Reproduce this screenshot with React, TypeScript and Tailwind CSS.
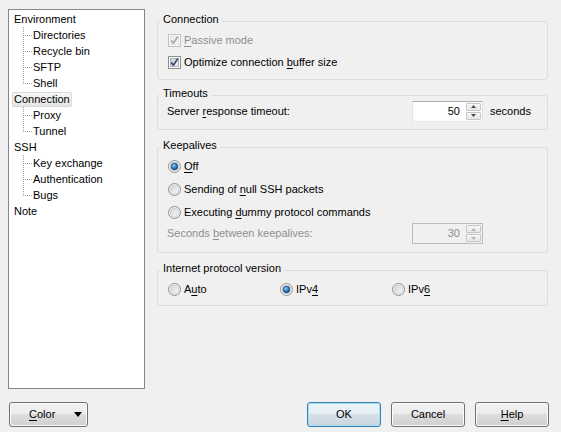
import React from "react";

const font = "font-['Liberation_Sans',Arial,sans-serif]";

function U({ children }: { children: React.ReactNode }) {
  return <span className="underline decoration-1 underline-offset-[2px]">{children}</span>;
}

function CheckBox({ checked, disabled }: { checked?: boolean; disabled?: boolean }) {
  const id = disabled ? "cbd" : "cbn";
  return (
    <svg width="13" height="13" viewBox="0 0 13 13" className="shrink-0">
      <defs>
        <linearGradient id={id} x1="0" y1="0" x2="1" y2="1">
          <stop offset="0" stopColor={disabled ? "#ececec" : "#cbcfd5"} />
          <stop offset="1" stopColor={disabled ? "#f7f7f7" : "#f6f6f6"} />
        </linearGradient>
      </defs>
      <rect x="0.5" y="0.5" width="12" height="12" fill="#fcfcfc" stroke={disabled ? "#c2c2c2" : "#8e8f8f"} />
      <rect x="2.5" y="2.5" width="8" height="8" fill={`url(#${id})`} stroke={disabled ? "#e2e2e2" : "#b1b4b9"} />
      {checked && (
        <path
          d="M3.2 6.4 L5.4 9.2 L9.9 2.6"
          fill="none"
          stroke={disabled ? "#a9a9a9" : "#3d4c70"}
          strokeWidth="1.7"
          strokeLinejoin="round"
        />
      )}
    </svg>
  );
}

function Radio({ checked }: { checked?: boolean }) {
  return (
    <svg width="13" height="13" viewBox="0 0 13 13" className="shrink-0">
      <defs>
        <linearGradient id="rbg" x1="0" y1="0" x2="1" y2="1">
          <stop offset="0" stopColor="#cdd1d6" />
          <stop offset="1" stopColor="#fbfbfb" />
        </linearGradient>
        <radialGradient id="rdot" cx="0.4" cy="0.35" r="0.7">
          <stop offset="0" stopColor="#9bd0f5" />
          <stop offset="0.55" stopColor="#2f78c0" />
          <stop offset="1" stopColor="#16466f" />
        </radialGradient>
      </defs>
      <circle cx="6.5" cy="6.5" r="6" fill="#f4f4f4" stroke="#8e8f8f" />
      <circle cx="6.5" cy="6.5" r="4.3" fill="url(#rbg)" stroke="#c7cacf" strokeWidth="0.8" />
      {checked && <circle cx="6.5" cy="6.5" r="3.4" fill="url(#rdot)" stroke="#1d4a78" strokeWidth="0.6" />}
    </svg>
  );
}

function SpinArrow({ up, disabled }: { up?: boolean; disabled?: boolean }) {
  return (
    <div className="flex h-[8px] w-[15px] items-center justify-center rounded-[1px] border border-[#c3c6ca] bg-[linear-gradient(to_bottom,#f7f7f7,#e6e6e6)]">
      <svg width="5" height="3" viewBox="0 0 5 3">
        <path d={up ? "M0 3 L2.5 0 L5 3 Z" : "M0 0 L2.5 3 L5 0 Z"} fill={disabled ? "#b4b4b4" : "#4a4a4a"} />
      </svg>
    </div>
  );
}

function Spin({ value, disabled }: { value: string; disabled?: boolean }) {
  return (
    <div
      className={`flex h-[21px] w-[71px] shrink-0 items-center border ${
        disabled ? "border-[#b9bcc0] bg-[#f0f0f0] text-[#8f8f8f]" : "border-[#abadb3] border-b-[#e3e9ef] border-l-[#e2e3ea] border-r-[#dbdfe6] bg-white"
      }`}
    >
      <span className="flex-1 pr-[6px] text-right">{value}</span>
      <div className="mr-[1px] flex flex-col gap-[1px]">
        <SpinArrow up disabled={disabled} />
        <SpinArrow disabled={disabled} />
      </div>
    </div>
  );
}

function Group({ title, className, children }: { title: string; className?: string; children: React.ReactNode }) {
  return (
    <fieldset className={`rounded-[3px] border border-[#d5dfe5] ${className ?? ""}`}>
      <legend className="ml-[2px] h-[16px] px-[3px] pb-[4px] leading-[12px]">{title}</legend>
      {children}
    </fieldset>
  );
}

function Connector({ last }: { last?: boolean }) {
  const v = [];
  for (let y = 0; y < (last ? 9 : 16); y += 2) v.push(<rect key={"v" + y} x="9" y={y} width="1" height="1" />);
  const h = [11, 13, 15, 17].map((x) => <rect key={"h" + x} x={x} y="8" width="1" height="1" />);
  return (
    <svg width="19" height="16" viewBox="0 0 19 16" className="shrink-0" fill="#a0a0a0">
      {v}
      {h}
    </svg>
  );
}

const tree: { label: string; children?: string[]; selected?: boolean }[] = [
  { label: "Environment", children: ["Directories", "Recycle bin", "SFTP", "Shell"] },
  { label: "Connection", children: ["Proxy", "Tunnel"], selected: true },
  { label: "SSH", children: ["Key exchange", "Authentication", "Bugs"] },
  { label: "Note" },
];

function Tree() {
  return (
    <div className="ml-[8px] mt-[9px] h-[380px] w-[137px] shrink-0 border border-[#828790] bg-white pl-[3px] pt-[1px]">
      {tree.map((node) => (
        <div key={node.label}>
          <div className="flex h-[16px] items-center">
            <span
              className={`flex h-[15px] items-center border px-[1px] ${
                node.selected ? "rounded-[2px] border-[#d9d9d9] bg-[linear-gradient(to_bottom,#f8f8f8,#e5e5e5)]" : "border-transparent"
              }`}
            >
              {node.label}
            </span>
          </div>
          {node.children?.map((c, i) => (
            <div key={c} className="flex h-[16px] items-center pl-[2px]">
              <Connector last={i === node.children!.length - 1} />
              <span>{c}</span>
            </div>
          ))}
        </div>
      ))}
    </div>
  );
}

function Button({ children, primary, className }: { children: React.ReactNode; primary?: boolean; className?: string }) {
  return (
    <div
      className={`flex h-[25px] items-center rounded-[3px] border ${
        primary
          ? "border-[#3c7fb1] shadow-[inset_0_0_0_1px_#a6e0f7] bg-[linear-gradient(to_bottom,#eef4f8_0%,#e4edf3_50%,#d5e1e9_50%,#c8d6df_100%)]"
          : "border-[#707070] shadow-[inset_0_0_0_1px_#fcfcfc] bg-[linear-gradient(to_bottom,#f2f2f2_0%,#ebebeb_50%,#dddddd_50%,#cfcfcf_100%)]"
      } ${className ?? ""}`}
    >
      {children}
    </div>
  );
}

export default function App() {
  return (
    <div className={`flex h-[432px] w-[561px] flex-col overflow-hidden bg-[#f0f0f0] text-[11px] text-black ${font}`}>
      <div className="flex">
        <Tree />
        <div className="ml-[12px] flex w-[391px] flex-col">
          {/* Connection */}
          <Group title="Connection" className="mt-[13px] pb-[6px]">
            <div className="flex h-[22px] items-center gap-[3px] pl-[10px] text-[#8f8f8f]">
              <CheckBox checked disabled />
              <span>
                <U>P</U>assive mode
              </span>
            </div>
            <div className="flex h-[22px] items-center gap-[3px] pl-[10px]">
              <CheckBox checked />
              <span>
                Optimize connection <U>b</U>uffer size
              </span>
            </div>
          </Group>

          {/* Timeouts */}
          <Group title="Timeouts" className="mt-[7px] pb-[7px]">
            <div className="-mt-[3px] flex h-[22px] items-center pl-[9px]">
              <span className="w-[245px]">
                Server <U>r</U>esponse timeout:
              </span>
              <Spin value="50" />
              <span className="ml-[7px]">seconds</span>
            </div>
          </Group>

          {/* Keepalives */}
          <Group title="Keepalives" className="mt-[9px] pb-[8px]">
            <div className="flex h-[23px] items-center gap-[3px] pl-[10px]">
              <Radio checked />
              <span>
                <U>O</U>ff
              </span>
            </div>
            <div className="flex h-[23px] items-center gap-[3px] pl-[10px]">
              <Radio />
              <span>
                Sending of <U>n</U>ull SSH packets
              </span>
            </div>
            <div className="flex h-[23px] items-center gap-[3px] pl-[10px]">
              <Radio />
              <span>
                Executing <U>d</U>ummy protocol commands
              </span>
            </div>
            <div className="-mt-[1px] flex h-[21px] items-center pl-[9px] text-[#8f8f8f]">
              <span className="w-[245px]">
                Seconds <U>b</U>etween keepalives:
              </span>
              <Spin value="30" disabled />
            </div>
          </Group>

          {/* IP version */}
          <Group title="Internet protocol version" className="mt-[9px] pb-[5px]">
            <div className="flex h-[22px] items-center pl-[10px]">
              <div className="flex w-[112px] items-center gap-[3px]">
                <Radio />
                <span>
                  A<U>u</U>to
                </span>
              </div>
              <div className="flex w-[112px] items-center gap-[3px]">
                <Radio checked />
                <span>
                  IPv<U>4</U>
                </span>
              </div>
              <div className="flex w-[112px] items-center gap-[3px]">
                <Radio />
                <span>
                  IPv<U>6</U>
                </span>
              </div>
            </div>
          </Group>
        </div>
      </div>

      {/* Bottom buttons */}
      <div className="mt-[13px] flex pl-[9px] pr-[12px]">
        <Button className="w-[79px] pl-[19px] pr-[5px]">
          <span>
            <U>C</U>olor
          </span>
          <svg width="8" height="5" viewBox="0 0 8 5" className="ml-auto">
            <path d="M0 0 H8 L4 5 Z" fill="#000" />
          </svg>
        </Button>
        <div className="flex-1" />
        <Button primary className="w-[74px] justify-center">
          OK
        </Button>
        <Button className="ml-[10px] w-[74px] justify-center">Cancel</Button>
        <Button className="ml-[10px] w-[74px] justify-center">
          <span>
            <U>H</U>elp
          </span>
        </Button>
      </div>
    </div>
  );
}
